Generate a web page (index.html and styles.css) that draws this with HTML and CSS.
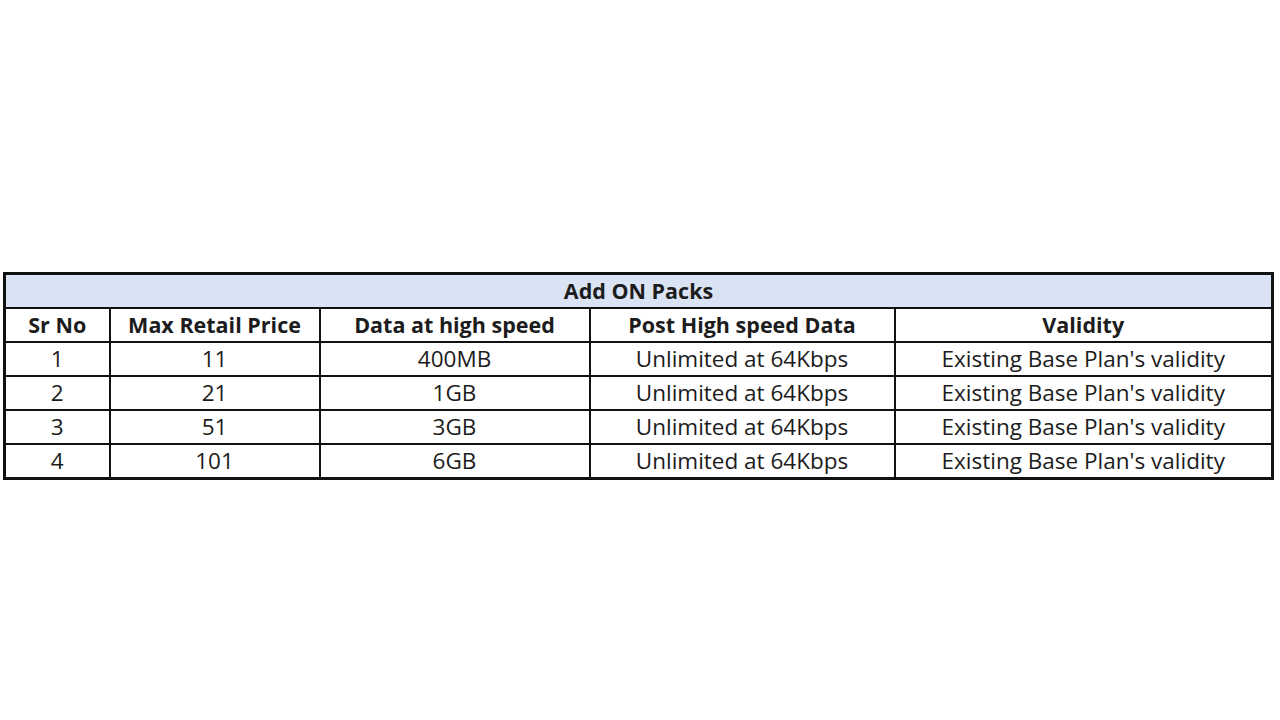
FILE: index.html
```html
<!DOCTYPE html>
<html>
<head>
<meta charset="utf-8">
<link rel="stylesheet" href="styles.css">
</head>
<body>
<div class="page">
<table class="packs">
  <colgroup>
    <col class="c1"><col class="c2"><col class="c3"><col class="c4"><col class="c5">
  </colgroup>
  <thead>
    <tr class="title"><th colspan="5">Add ON Packs</th></tr>
    <tr class="head">
      <th>Sr No</th><th>Max Retail Price</th><th>Data at high speed</th><th>Post High speed Data</th><th>Validity</th>
    </tr>
  </thead>
  <tbody>
    <tr><td>1</td><td>11</td><td>400MB</td><td>Unlimited at 64Kbps</td><td>Existing Base Plan's validity</td></tr>
    <tr><td>2</td><td>21</td><td>1GB</td><td>Unlimited at 64Kbps</td><td>Existing Base Plan's validity</td></tr>
    <tr><td>3</td><td>51</td><td>3GB</td><td>Unlimited at 64Kbps</td><td>Existing Base Plan's validity</td></tr>
    <tr><td>4</td><td>101</td><td>6GB</td><td>Unlimited at 64Kbps</td><td>Existing Base Plan's validity</td></tr>
  </tbody>
</table>
</div>
</body>
</html>
```
FILE: styles.css
```css
html, body {
  margin: 0;
  padding: 0;
  background: #ffffff;
}
.page {
  width: 1280px;
  height: 720px;
  padding: 272px 0 0 3px;
  box-sizing: border-box;
}
.packs {
  border-collapse: collapse;
  width: 1271px;
  table-layout: fixed;
  border: 3px solid #111;
  font-family: "Open Sans", "Liberation Sans", sans-serif;
  font-size: 22.5px;
  color: #1c1c1c;
}
.c1 { width: 105px; }
.c2 { width: 210px; }
.c3 { width: 270px; }
.c4 { width: 305px; }
.c5 { width: auto; }
.packs th, .packs td {
  border: 2px solid #111;
  height: 32px;
  padding: 0;
  text-align: center;
  vertical-align: middle;
  line-height: 24px;
  white-space: nowrap;
}
.packs th {
  font-weight: 700;
  font-size: 21.5px;
}
.title th {
  background: #dae3f3;
}
```
